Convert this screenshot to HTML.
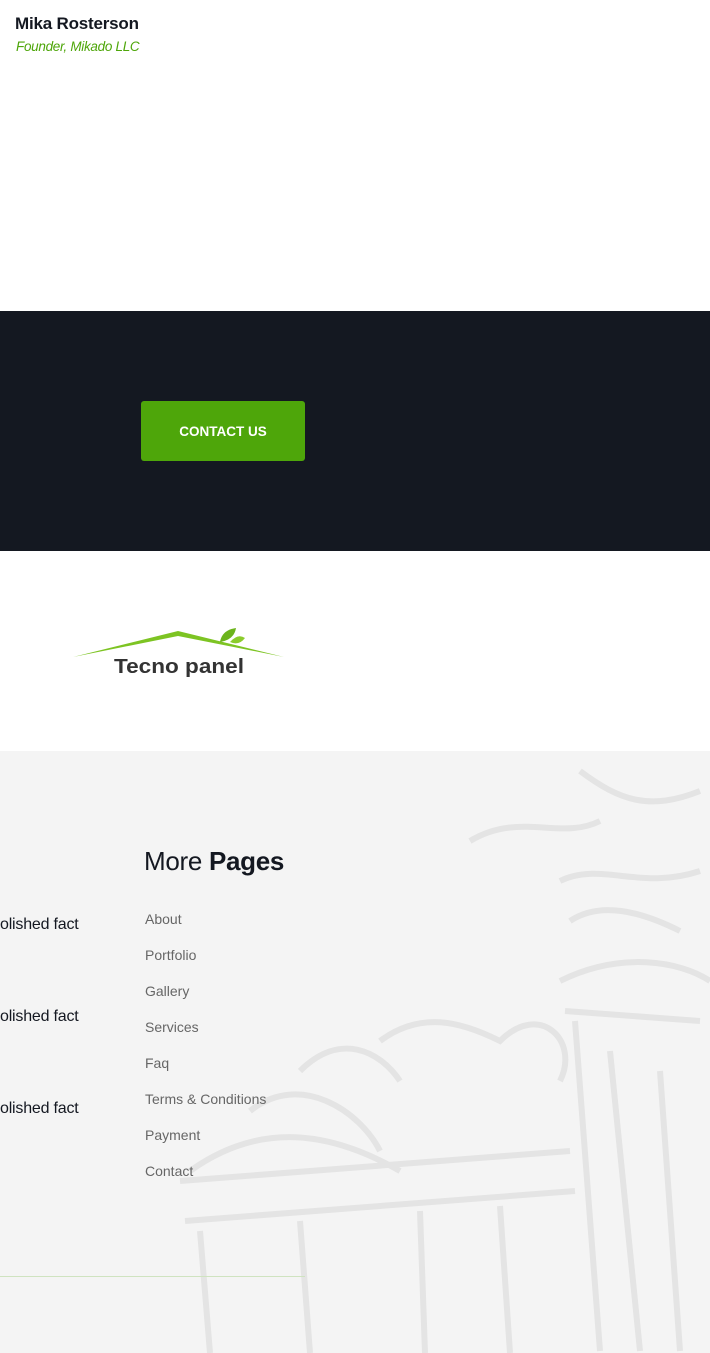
<!DOCTYPE html>
<html><head><meta charset="utf-8">
<style>
*{margin:0;padding:0;box-sizing:border-box}
body{width:710px;height:1353px;overflow:hidden;font-family:"Liberation Sans",sans-serif;background:#fff;position:relative}
.abs{position:absolute}
</style></head><body>
<div class="abs" style="left:15px;top:14px;font-size:17px;font-weight:bold;color:#141821;letter-spacing:-0.2px">Mika Rosterson</div>
<div class="abs" style="left:16px;top:39px;font-size:13.5px;font-style:italic;color:#4ea60a;letter-spacing:-0.3px">Founder, Mikado LLC</div>

<div class="abs" style="left:0;top:311px;width:710px;height:240px;background:#141821"></div>
<div class="abs" style="left:141px;top:401px;width:164px;height:60px;background:#4ea60a;border-radius:3px;color:#fff;font-weight:bold;font-size:13.5px;text-align:center;line-height:62px">CONTACT US</div>

<svg class="abs" style="left:70px;top:622px" width="220" height="60">
<polygon points="3,35 108,9 214,35 108,14" fill="#7dc423"/>
<path d="M150,20 q2,-12 16,-14 q-2,12 -16,14z" fill="#6cb41c"/>
<path d="M160,20 q8,-9 15,-4 q-6,8 -15,4z" fill="#8bcc2c"/>
<text x="44" y="51" font-family="Liberation Sans Narrow, Liberation Sans, sans-serif" font-weight="bold" font-size="20" fill="#333" textLength="130" lengthAdjust="spacingAndGlyphs">Tecno panel</text>
</svg>

<div class="abs" style="left:0;top:751px;width:710px;height:602px;background:#f4f4f4;overflow:hidden">
<svg width="710" height="602" style="position:absolute;left:0;top:0" fill="none" stroke="#e4e4e4" stroke-width="6">
<path d="M470,90 C520,60 560,90 600,70 M580,20 C620,50 650,60 700,40 M560,130 C600,110 640,140 700,120"/>
<path d="M570,170 C600,150 640,160 680,180 M560,230 C620,200 680,210 710,230"/>
<path d="M380,290 C420,260 460,270 500,290 C540,250 580,290 560,330 M300,320 C340,280 380,300 400,330 M250,360 C300,320 360,360 380,400 M190,420 C260,370 330,380 400,420"/>
<path d="M565,260 L700,270 M575,270 L600,600 M610,300 L640,600 M660,320 L680,600"/>
<path d="M180,430 L570,400 M185,470 L575,440 M200,480 L210,602 M300,470 L310,602 M420,460 L425,602 M500,455 L510,602"/>
</svg>
</div>
<div class="abs" style="left:144px;top:846px;font-size:26px;color:#141821;letter-spacing:-0.3px">More <b>Pages</b></div>
<div class="abs" style="left:145px;top:901px;font-size:14px;color:#666;line-height:36px">About<br>Portfolio<br>Gallery<br>Services<br>Faq<br>Terms &amp; Conditions<br>Payment<br>Contact</div>
<div class="abs" style="left:0;top:916px;font-size:16px;color:#141821;letter-spacing:-0.2px">olished fact</div>
<div class="abs" style="left:0;top:1008px;font-size:16px;color:#141821;letter-spacing:-0.2px">olished fact</div>
<div class="abs" style="left:0;top:1100px;font-size:16px;color:#141821;letter-spacing:-0.2px">olished fact</div>
<div class="abs" style="left:0;top:1276px;width:305px;height:1px;background:#cfe3c0"></div>
</body></html>
